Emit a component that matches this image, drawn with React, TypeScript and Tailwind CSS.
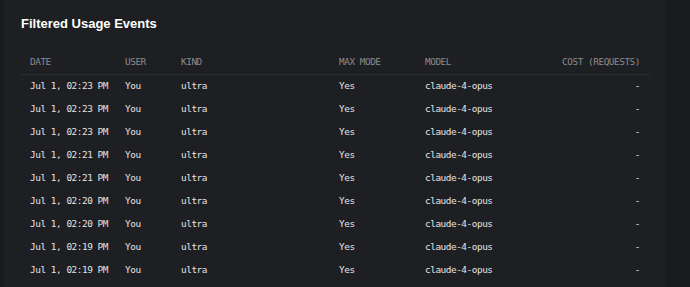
const rows = [
  '02:23',
  '02:23',
  '02:23',
  '02:21',
  '02:21',
  '02:20',
  '02:20',
  '02:19',
  '02:19',
];

export default function App() {
  return (
    <div className="w-[690px] h-[287px] overflow-hidden bg-[#1a1b1e] flex">
      <div className="ml-[4px] w-[662px] h-full bg-[#1e1f23] px-[17px] pt-[16px] pb-2">
        <h2 className="text-[13px] leading-[16px] font-bold text-white font-['Liberation_Sans',Arial,sans-serif]">
          Filtered Usage Events
        </h2>
        <table className="mt-[19px] w-[629px] table-fixed border-collapse font-['DejaVu_Sans_Mono','Liberation_Mono',monospace] text-[9.4px] tracking-[-0.45px]">
          <colgroup>
            <col className="w-[95px]" />
            <col className="w-[56px]" />
            <col className="w-[158px]" />
            <col className="w-[86px]" />
            <col className="w-[120px]" />
            <col />
          </colgroup>
          <thead>
            <tr className="h-[23px] border-b border-[#2c2d32] text-[#8b8c91] uppercase text-left">
              <th className="pl-[9px] py-0 font-normal leading-[12px]">Date</th>
              <th className="pl-[9px] py-0 font-normal leading-[12px]">User</th>
              <th className="pl-[9px] py-0 font-normal leading-[12px]">Kind</th>
              <th className="pl-[9px] py-0 font-normal leading-[12px]">Max Mode</th>
              <th className="pl-[9px] py-0 font-normal leading-[12px]">Model</th>
              <th className="pr-[10px] py-0 font-normal leading-[12px] text-right">Cost (Requests)</th>
            </tr>
          </thead>
          <tbody className="text-[#e4e4e6] leading-[12px]">
            {rows.map((t, i) => (
              <tr key={i} className="h-[23.1px]">
                <td className="pl-[9px]">Jul 1, {t} PM</td>
                <td className="pl-[9px]">You</td>
                <td className="pl-[9px]">ultra</td>
                <td className="pl-[9px]">Yes</td>
                <td className="pl-[9px]">claude-4-opus</td>
                <td className="pr-[10px] text-right">-</td>
              </tr>
            ))}
          </tbody>
        </table>
      </div>
    </div>
  );
}
